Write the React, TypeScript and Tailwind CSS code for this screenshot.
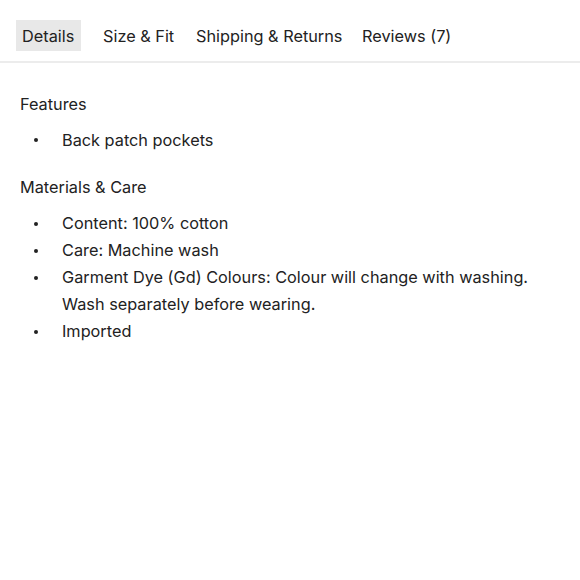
import React from "react";

const tabs = [
  { label: "Details", w: "w-[65px]", active: true },
  { label: "Size & Fit", w: "w-[77px]", active: false },
  { label: "Shipping & Returns", w: "w-[150px]", active: false },
  { label: "Reviews (7)", w: "w-[98px]", active: false },
];

function Bullet({ children }: { children: React.ReactNode }) {
  return (
    <li className="flex items-start">
      <span className="flex h-[27px] w-[42px] shrink-0 items-center pl-[14px]">
        <span className="h-[4px] w-[4px] rounded-full bg-[#222]" />
      </span>
      <span className="flex-1">{children}</span>
    </li>
  );
}

export default function App() {
  return (
    <div className="min-h-[580px] bg-white font-['Inter',sans-serif] text-[16.3px] text-[#222]">
      <div className="flex gap-[16px] border-b-2 border-[#ececec] px-[16px] pb-[10px] pt-[20px]">
        {tabs.map((t) => (
          <div
            key={t.label}
            className={
              t.active
                ? `flex h-[31px] items-center whitespace-nowrap bg-[#e8e8e8] px-[6px] pt-[1px] ${t.w}`
                : `flex h-[31px] items-center whitespace-nowrap px-[6px] pt-[1px] ${t.w}`
            }
          >
            {t.label}
          </div>
        ))}
      </div>
      <div className="px-[20px] pt-[28px] leading-[26.5px]">
        <h3>Features</h3>
        <ul className="mt-[9px] leading-[27px]">
          <Bullet>Back patch pockets</Bullet>
        </ul>
        <h3 className="mt-[20px]">Materials &amp; Care</h3>
        <ul className="mt-[10px] leading-[27px]">
          <Bullet>Content: 100% cotton</Bullet>
          <Bullet>Care: Machine wash</Bullet>
          <Bullet>Garment Dye (Gd) Colours: Colour will change with washing. Wash separately before wearing.</Bullet>
          <Bullet>Imported</Bullet>
        </ul>
      </div>
    </div>
  );
}
